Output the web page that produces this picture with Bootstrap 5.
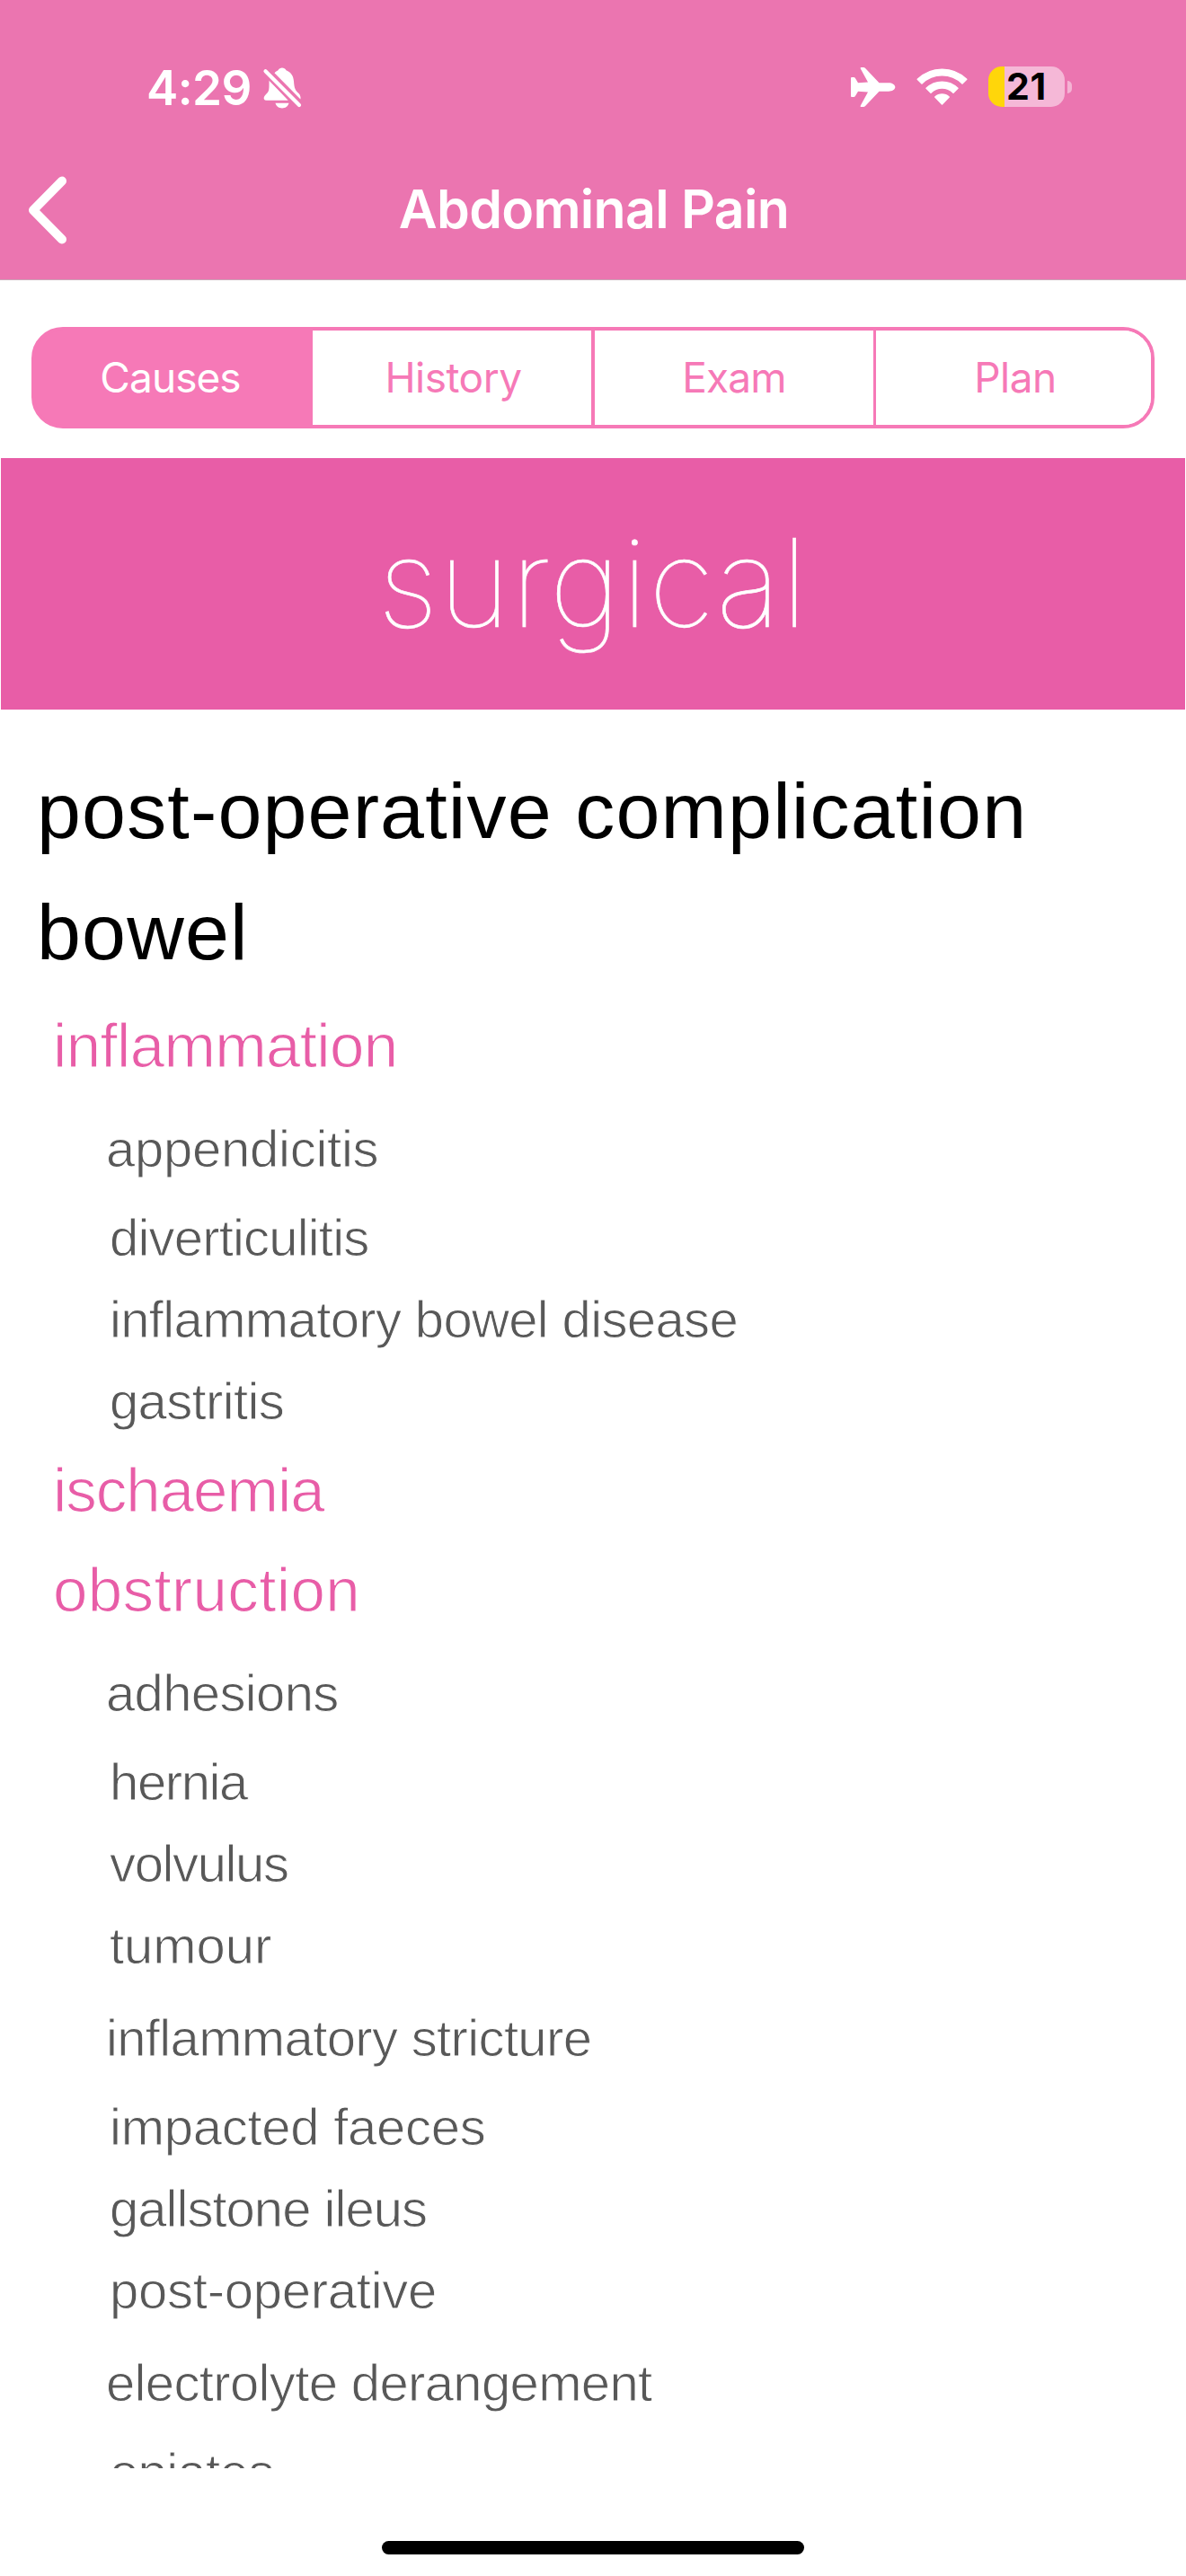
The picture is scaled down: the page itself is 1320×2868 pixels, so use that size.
<!DOCTYPE html>
<html lang="en">
<head>
<meta charset="utf-8">
<meta name="viewport" content="width=device-width, initial-scale=1">
<title>Abdominal Pain</title>
<link href="https://cdn.jsdelivr.net/npm/bootstrap@5.3.0/dist/css/bootstrap.min.css" rel="stylesheet">
<style>
  body { background: #fff; font-family: Inter, "Liberation Sans", sans-serif; }
  .screen { width: 1320px; height: 2868px; overflow: hidden; }

  .app-header { background: #eb75b0; height: 312px; border-bottom: 1px solid #c9a9b9; }
  .status-bar { height: 156px; padding: 36px 127px 0 166px; }
  .status-left { height: 124px; }
  .status-right { height: 121px; }
  .clock { font-size: 53px; font-weight: 600; letter-spacing: -.6px; line-height: 64px; width: 128px; margin-left: -3px; }
  .status-gap { margin-left: 22px; }
  .battery { width: 85px; height: 45px; border-radius: 15px; color: #000; font-size: 41px; font-weight: 700; letter-spacing: .6px;
             background: linear-gradient(90deg, #ffd60a 18px, #f5b8d7 18px); line-height: 45px; padding-left: 20px; }
  .battery-cap { width: 5px; height: 14px; border-radius: 0 7px 7px 0; background: #f4b3d4; margin-left: 3px; }
  .title-bar { height: 155px; padding-left: 31px; }
  .title-bar h1 { font-size: 59px; font-weight: 600; letter-spacing: -.71px; line-height: 154px; padding-left: 2px; }

  .tabs-wrap { padding: 52px 35px 33px; }
  .segments { height: 113px; border: 4px solid #f679b7; border-radius: 35px; background: linear-gradient(90deg, #f679b7 100px, #fff 100px); }
  .segments .btn { --bs-btn-color: #f679b7; --bs-btn-active-bg: #f679b7; --bs-btn-active-color: #fff; font-size: 46px;
    line-height: 1; letter-spacing: -.5px; border: 0; border-radius: 0; padding: 0 0 1px; background-color: #fff; flex: none; }
  .segments .btn.active { background-color: #f679b7; width: 309px; padding-right: 8px; letter-spacing: -.95px; }
  .segments .seg-history { width: 310px; padding-left: 3px; }
  .segments .seg-exam { width: 314px; border-left: 4px solid #f679b7; letter-spacing: -.8px; }
  .segments .seg-plan { width: 309px; border-left: 3px solid #f679b7; padding-left: 4px; }

  .banner { height: 280px; margin: 0 1px; background: #e85da7; color: #fff; font-weight: 100; font-size: 136px;
    letter-spacing: 1px; line-height: 278px; -webkit-text-stroke: .6px #fff; }

  .causes { height: 1958px; padding-top: 50px; overflow: hidden; font-family: "Liberation Sans", Arial, sans-serif; background: #fff; }
  .lvl-1 { font-size: 88px; line-height: 125px; padding: 0 0 10px 41px; color: #000; letter-spacing: 1.15px; }
  .lvl-2 { font-size: 69px; line-height: 109px; padding: 0 0 2px 59px; color: #e85da7; -webkit-text-stroke: 1.1px #fff; }
  .lvl-3 { font-size: 58px; line-height: 91px; padding-left: 122px; color: #585858; -webkit-text-stroke: .9px #fff; }
  .lvl-3.lead-in { line-height: 106px; padding: 5px 0 0 118px; }
  .sp-wide { letter-spacing: .42px; }
  .sp-0 { letter-spacing: -.04px; }
  .sp-2 { letter-spacing: -.25px; }
  .sp-6 { letter-spacing: -.64px; }
  .sp-8 { letter-spacing: -.81px; }
  .sp-10 { letter-spacing: -.97px; }
  .sp-12 { letter-spacing: -1px; }
  .sp-14 { letter-spacing: -1.37px; }
  .home-bar { width: 470px; height: 15px; border-radius: 8px; background: #000; margin: 81px auto 0; }
</style>
</head>
<body>
<div class="screen">
  <header class="app-header text-white">
    <div class="status-bar d-flex align-items-start">
      <div class="status-left d-flex align-items-center">
        <div class="clock">4:29</div>
        <svg width="46" height="48" viewBox="0 0 46 48" fill="#fff" aria-label="Silent">
          <path d="M14.500 7.200C16.200 5.500 17.600 5 18.500 4.300 19.400 2.300 21.200 1.500 23 1.500S26.600 2.300 27.500 4.300C33 6.500 35.500 10.500 36 16.500 36.500 24 37.500 26.500 41.500 30 43 31.500 44 34 43.400 36.500Z"/>
          <path d="M8.600 15.500 29.700 37.700H5.500C3 37.700 2 35.800 3 33.700 4 31.600 7.500 29.500 8.200 26 8.800 22.500 8.400 18.500 8.600 15.500Z"/>
          <path d="M15.500 40.800H30.500C29.500 44.500 26.500 46.500 23 46.500S16.500 44.500 15.500 40.800Z"/>
          <path d="M4.500 5.500 41.800 43" stroke="#eb75b0" stroke-width="8.500"/>
          <path d="M4.500 5.200 42 43" stroke="#fff" stroke-width="4.200" stroke-linecap="round"/>
        </svg>
      </div>
      <div class="status-right d-flex align-items-center ms-auto">
        <svg width="50" height="46" viewBox="0 0 50 46" fill="#fff" aria-label="Airplane mode">
          <path d="M0 13Q0 12 1 12H3.200Q4.200 12 4.900 13L8 18.300 19 17.600 10.800 2.500Q10 1 11.500 1H14Q15.200 1 16.100 2L31.500 18.200H42C46 18.200 49.300 20.300 49.300 23S46 27.700 42 27.700H31.500L16.100 44Q15.200 45 14 45H11.500Q10 45 10.800 43.500L19 28.400 8 27.700 4.900 33Q4.200 34 3.200 34H1Q0 34 0 33Z"/>
        </svg>
        <svg class="status-gap" width="59" height="44" viewBox="0 0 59 44" aria-label="Wi-Fi">
          <g fill="#fff" stroke="#fff" stroke-width="1.500" stroke-linejoin="round">
            <path d="M2.200 13.300C17.500-1.600 41.500-1.600 56.800 13.300L52 18C39.300 5.800 19.700 5.800 7 18Z"/>
            <path d="M12 23.300C21.800 13.800 37.200 13.800 47 23.300L42 28.200C35 21.400 24 21.400 17 28.200Z"/>
            <path d="M21.800 33C26.200 29 32.800 29 37.200 33L29.500 41Z"/>
          </g>
        </svg>
        <div class="status-gap d-flex align-items-center">
          <div class="battery">21</div>
          <div class="battery-cap"></div>
        </div>
      </div>
    </div>
    <div class="title-bar position-relative d-flex align-items-center">
      <svg width="46" height="76" viewBox="0 0 46 76" fill="none" stroke="#fff" stroke-width="10" stroke-linecap="round" stroke-linejoin="round" aria-label="Back">
        <path d="M38 5.500 6 38 38 70.500"/>
      </svg>
      <h1 class="position-absolute top-0 start-0 w-100 text-center m-0">Abdominal Pain</h1>
    </div>
  </header>

  <nav class="tabs-wrap">
    <div class="segments d-flex overflow-hidden">
      <button type="button" class="btn active">Causes</button>
      <button type="button" class="btn seg-history">History</button>
      <button type="button" class="btn seg-exam">Exam</button>
      <button type="button" class="btn seg-plan">Plan</button>
    </div>
  </nav>

  <div class="banner text-center">surgical</div>

  <main class="causes text-nowrap">
    <div class="lvl-1">post-operative complication</div>
    <div class="lvl-1">bowel</div>
    <div class="lvl-2 sp-6">inflammation</div>
    <div class="lvl-3 lead-in sp-2">appendicitis</div>
    <div class="lvl-3 sp-8">diverticulitis</div>
    <div class="lvl-3 sp-6">inflammatory bowel disease</div>
    <div class="lvl-3 sp-6">gastritis</div>
    <div class="lvl-2 sp-12">ischaemia</div>
    <div class="lvl-2 sp-wide">obstruction</div>
    <div class="lvl-3 lead-in sp-6">adhesions</div>
    <div class="lvl-3 sp-14">hernia</div>
    <div class="lvl-3 sp-14">volvulus</div>
    <div class="lvl-3 sp-0">tumour</div>
    <div class="lvl-3 lead-in sp-6">inflammatory stricture</div>
    <div class="lvl-3 sp-2">impacted faeces</div>
    <div class="lvl-3 sp-10">gallstone ileus</div>
    <div class="lvl-3 sp-2">post-operative</div>
    <div class="lvl-3 lead-in sp-6">electrolyte derangement</div>
    <div class="lvl-3 sp-6">opiates</div>
  </main>
  <div class="home-bar"></div>
</div>
<script src="https://cdn.jsdelivr.net/npm/bootstrap@5.3.0/dist/js/bootstrap.bundle.min.js"></script>
</body>
</html>
